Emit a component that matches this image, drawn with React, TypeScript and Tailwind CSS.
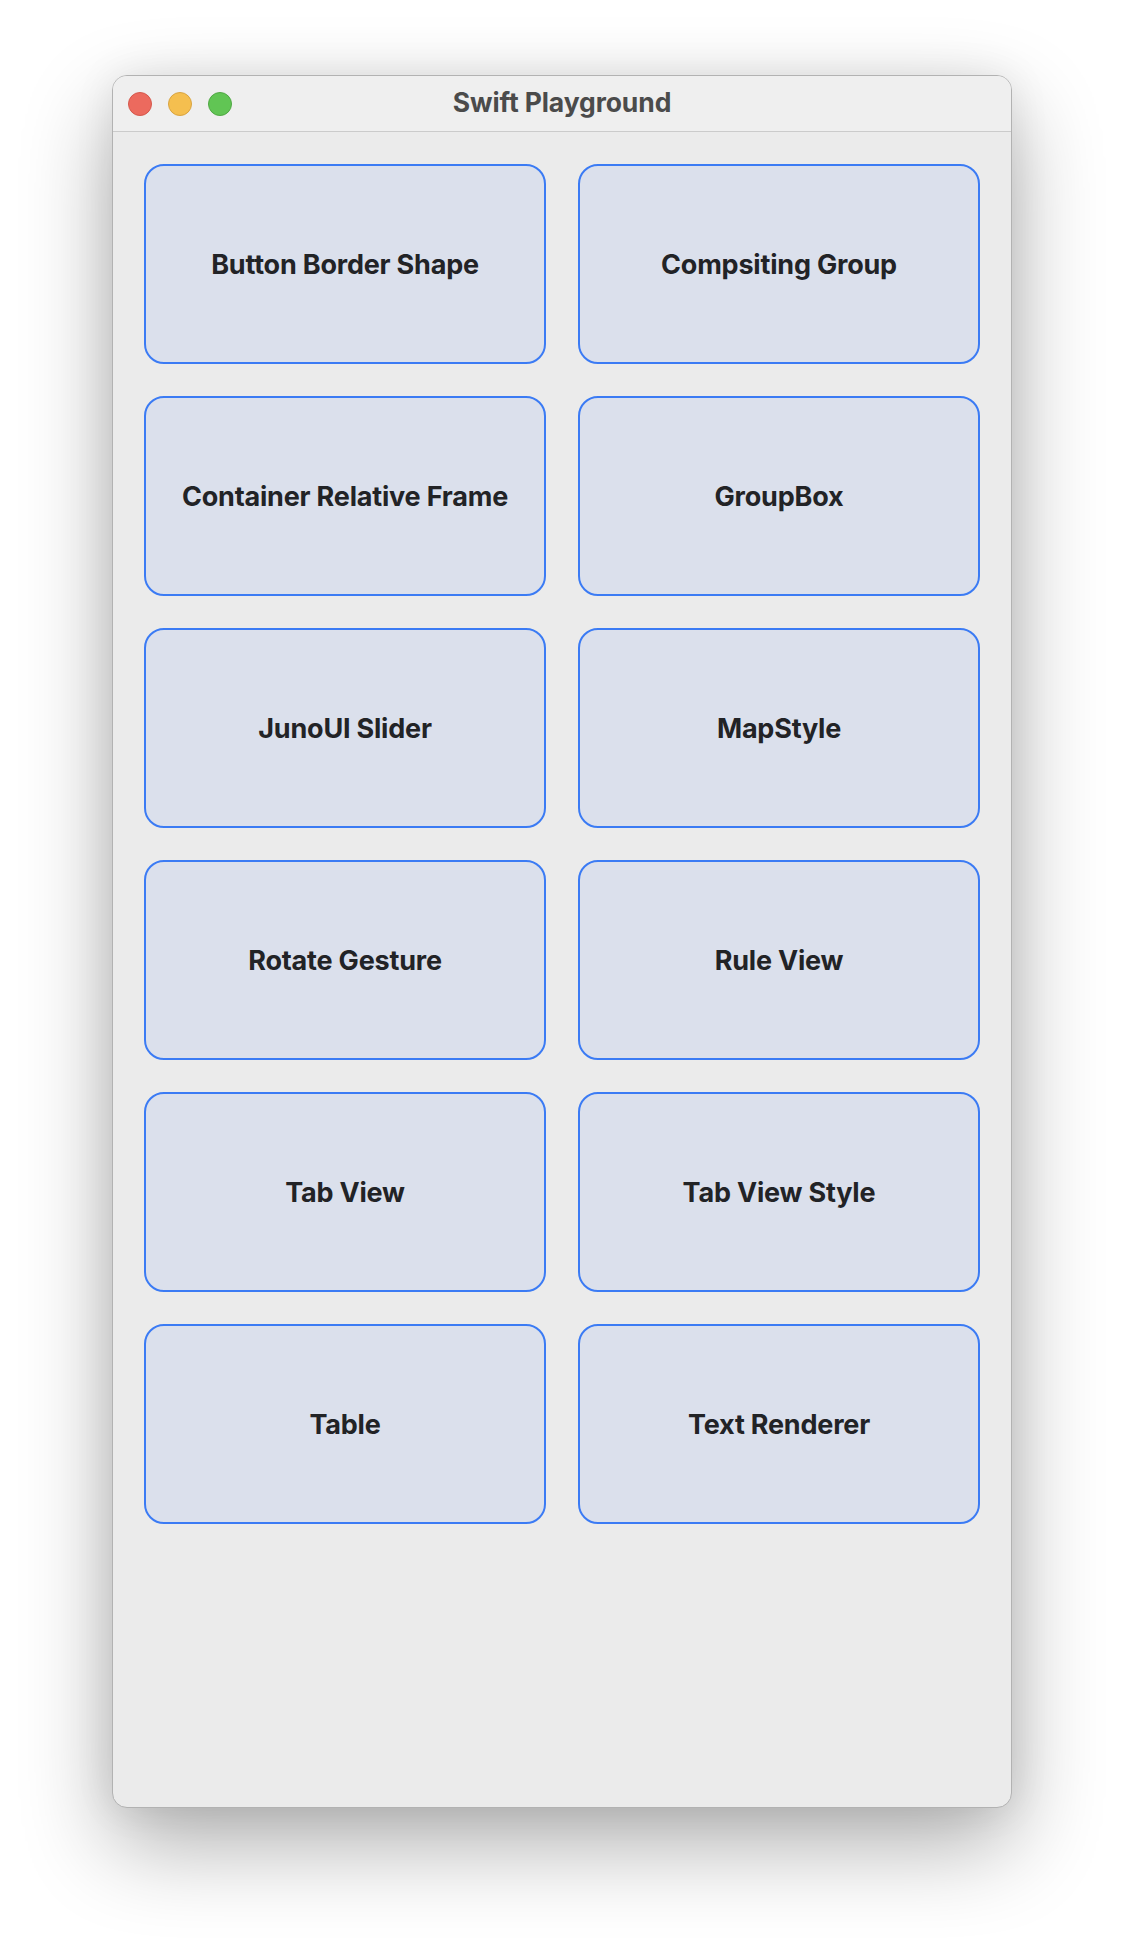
const items = [
  "Button Border Shape",
  "Compsiting Group",
  "Container Relative Frame",
  "GroupBox",
  "JunoUI Slider",
  "MapStyle",
  "Rotate Gesture",
  "Rule View",
  "Tab View",
  "Tab View Style",
  "Table",
  "Text Renderer",
];

const TrafficLights = () => (
  <div className="flex items-center gap-4 pl-[15px]">
    <span className="block h-6 w-6 rounded-full bg-[#ec6a5e] border border-[#d5584c]" />
    <span className="block h-6 w-6 rounded-full bg-[#f5bf4f] border border-[#d9a441]" />
    <span className="block h-6 w-6 rounded-full bg-[#61c554] border border-[#50a844]" />
  </div>
);

const PlaygroundCard = ({ label }: { label: string }) => {
  return (
    <div className="flex h-[200px] items-center justify-center rounded-[20px] border-2 border-[#3b7bf4] bg-[#dbe0ec] pt-[2px]">
      <span className="text-[27px] font-bold tracking-[-0.2px] text-[#222326]">
        {label}
      </span>
    </div>
  );
};

export default function App() {
  return (
    <div
      className="min-h-[1956px] bg-white pl-[112px] pt-[75px]"
      style={{ fontFamily: "Inter, 'Noto Sans', 'Liberation Sans', sans-serif" }}
    >
      <div className="flex h-[1733px] w-[900px] flex-col overflow-hidden rounded-[15px] border border-[#b2b2b2] bg-[#ebebeb] shadow-[0_36px_90px_rgba(0,0,0,0.32),0_0_40px_rgba(0,0,0,0.08)]">
        {/* title bar */}
        <div className="relative flex h-[56px] shrink-0 items-center border-b border-[#cbcbcb] bg-[#efefef]">
          <TrafficLights />
          <div className="absolute inset-0 flex items-center justify-center pb-[2px]">
            <span className="text-[26.5px] font-bold tracking-[-0.1px] text-[#4b4b4b]">
              Swift Playground
            </span>
          </div>
        </div>

        {/* content */}
        <div className="grid grid-cols-2 gap-8 px-[31px] pt-8">
          {items.map((item) => (
            <PlaygroundCard key={item} label={item} />
          ))}
        </div>
      </div>
    </div>
  );
}
